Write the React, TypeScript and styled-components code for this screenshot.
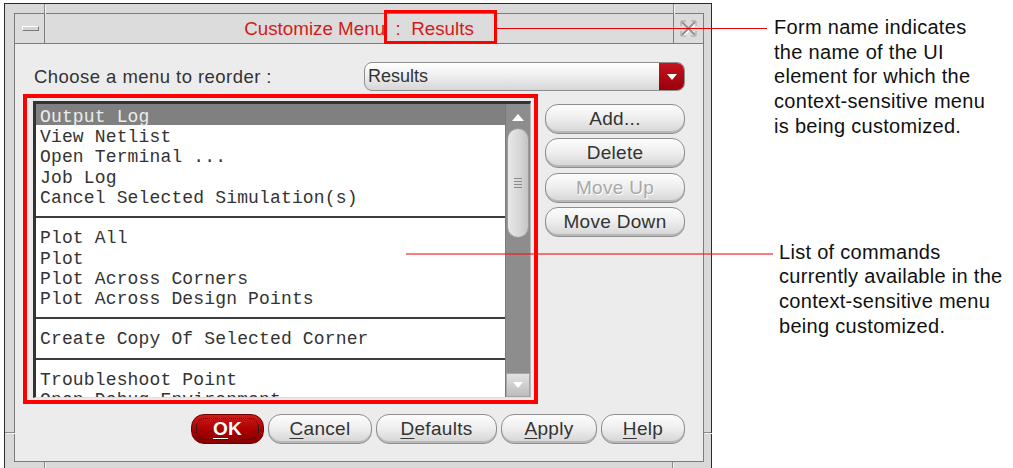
import React from "react";
import styled, { createGlobalStyle, css } from "styled-components";

const GlobalStyle = createGlobalStyle`
  html, body { margin: 0; padding: 0; background: #ffffff; }
  body { overflow: hidden; }
`;

const Page = styled.div`
  position: relative;
  width: 1013px;
  height: 468px;
  overflow: hidden;
  display: flex;
  align-items: flex-start;
  font-family: "Liberation Sans", Arial, sans-serif;
`;

const Window = styled.div`
  position: relative;
  flex: none;
  box-sizing: border-box;
  width: 708px;
  height: 470px;
  margin: 3px 0 0 4px;
  padding: 9px 7px 0 9px;
  background: #d9d9d9;
  border: 1px solid #2b2b2b;
  border-bottom: none;
`;

const FrameMark = styled.div<{ $x: number; $y: number; $w: number; $h: number }>`
  position: absolute;
  left: ${(p) => p.$x}px;
  top: ${(p) => p.$y}px;
  width: ${(p) => p.$w}px;
  height: ${(p) => p.$h}px;
  background: #8a8a8a;
  box-shadow: 1px 1px 0 #f4f4f4;
`;

const Inner = styled.div`
  box-sizing: border-box;
  height: 449px;
  display: flex;
  flex-direction: column;
  border: 1px solid #7c7c7c;
  background: #ececec;
`;

const TitleBar = styled.div`
  flex: none;
  height: 29px;
  display: flex;
  background: #dcdcdc;
  border-bottom: 1px solid #7c7c7c;
`;

const TitleButton = styled.div<{ $side: "left" | "right" }>`
  flex: none;
  width: 29px;
  display: grid;
  place-items: center;
  ${(p) =>
    p.$side === "left"
      ? css`border-right: 1px solid #7c7c7c;`
      : css`border-left: 1px solid #7c7c7c;`}
`;

const MinIcon = styled.div`
  width: 15px;
  height: 3px;
  background: #d4d4d4;
  border-top: 1px solid #ffffff;
  border-left: 1px solid #ffffff;
  border-bottom: 1px solid #7a7a7a;
  border-right: 1px solid #7a7a7a;
  margin-left: 1px;
`;

const Title = styled.div`
  flex: 1;
  text-align: center;
  color: #d41a1a;
  font-size: 18.8px;
  line-height: 29px;
  white-space: pre;
`;

const Body = styled.div`
  flex: 1;
  display: flex;
  flex-direction: column;
  padding: 18px 18px 0 18px;
`;

const TopRow = styled.div`
  display: flex;
  align-items: center;
  justify-content: space-between;
  height: 29px;
`;

const Label = styled.div`
  font-size: 18.5px;
  color: #333333;
  letter-spacing: 0.45px;
  padding-left: 1px;
`;

const Dropdown = styled.div`
  box-sizing: border-box;
  width: 321px;
  height: 29px;
  display: flex;
  border: 1px solid #8f8f8f;
  border-radius: 8px;
  overflow: hidden;
  background: linear-gradient(#ffffff, #f0f0f0 45%, #d6d6d6);
`;

const DropdownText = styled.div`
  flex: 1;
  padding-left: 3px;
  font-size: 18px;
  line-height: 27px;
  color: #333333;
`;

const DropdownArrow = styled.div`
  flex: none;
  width: 25px;
  display: grid;
  place-items: center;
  background: linear-gradient(#c41420, #9a0008);
`;

const Triangle = styled.div<{ $dir: "up" | "down"; $size: number }>`
  width: 0;
  height: 0;
  border-left: ${(p) => p.$size / 2}px solid transparent;
  border-right: ${(p) => p.$size / 2}px solid transparent;
  ${(p) =>
    p.$dir === "down"
      ? css`border-top: ${Math.round(p.$size * 0.55)}px solid #ffffff;`
      : css`border-bottom: ${Math.round(p.$size * 0.55)}px solid #ffffff;`}
`;

const MidRow = styled.div`
  display: flex;
  align-items: flex-start;
  gap: 14px;
  margin-top: 10px;
`;

const ListBox = styled.div`
  box-sizing: border-box;
  width: 498px;
  height: 297px;
  display: flex;
  overflow: hidden;
  background: #ffffff;
  border-top: 3px solid #333333;
  border-left: 3px solid #333333;
  border-right: 1px solid #b8b8b8;
  border-bottom: 1px solid #dcdcdc;
`;

const Rows = styled.div`
  flex: 1;
  overflow: hidden;
  padding-top: 1px;
`;

const Row = styled.div<{ $selected?: boolean }>`
  height: 20.23px;
  line-height: 25px;
  padding-left: 4px;
  font-family: "Liberation Mono", "Courier New", monospace;
  font-size: 18px;
  letter-spacing: 0.15px;
  white-space: pre;
  color: #333333;
  ${(p) =>
    p.$selected &&
    css`
      margin-top: -1px;
      height: 21.23px;
      line-height: 27px;
      background: #808080;
      color: #ededed;
    `}
`;

const Separator = styled.div`
  height: 20.23px;
  display: flex;
  align-items: center;
  padding-top: 2px;
  box-sizing: border-box;
  &::before {
    content: "";
    flex: 1;
    height: 2px;
    background: #3c3c3c;
  }
`;

const Scrollbar = styled.div`
  flex: none;
  width: 25px;
  display: flex;
  flex-direction: column;
  background: #8d8d8d;
  border-left: 1px solid #7a7a7a;
  box-sizing: border-box;
`;

const ScrollUp = styled.div`
  height: 22px;
  display: grid;
  place-items: center;
  padding-top: 4px;
  box-sizing: border-box;
`;

const Thumb = styled.div`
  margin: 2px 1px 0 1px;
  height: 110px;
  box-sizing: border-box;
  border-radius: 11px;
  border: 1px solid #9a9a9a;
  background: linear-gradient(90deg, #e8e8e8, #d6d6d6 60%, #c4c4c4);
  display: flex;
  flex-direction: column;
  align-items: center;
  justify-content: center;
  gap: 2px;
`;

const Grip = styled.div`
  width: 8px;
  height: 1px;
  background: #8a8a8a;
`;

const ScrollSpace = styled.div`
  flex: 1;
`;

const ScrollDown = styled.div`
  height: 24px;
  box-sizing: border-box;
  display: grid;
  place-items: center;
  background: linear-gradient(#e2e2e2, #bcbcbc);
  border: 1px solid #a5a5a5;
`;

const ButtonCol = styled.div`
  width: 140px;
  display: flex;
  flex-direction: column;
  gap: 4.4px;
  margin-top: 3px;
`;

const Button = styled.div<{ $w?: number; $disabled?: boolean; $primary?: boolean }>`
  position: relative;
  box-sizing: border-box;
  ${(p) => (p.$w ? css`width: ${p.$w}px;` : css`width: 100%;`)}
  height: 30px;
  display: flex;
  align-items: center;
  justify-content: center;
  border: 1px solid #8e8e8e;
  border-radius: 13px;
  background: linear-gradient(#fdfdfd, #ededed 50%, #d4d4d4);
  box-shadow: inset 0 -2px 0 #b8b8b8;
  font-size: 19px;
  letter-spacing: 0.3px;
  color: #333333;
  ${(p) =>
    p.$disabled &&
    css`
      color: #a9a9a9;
      text-shadow: 1px 1px 0 #ffffff;
    `}
  ${(p) =>
    p.$primary &&
    css`
      background: linear-gradient(#d01a1a, #a80000 55%, #880000);
      border-color: #6a0000;
      box-shadow: none;
      color: #ffffff;
      font-weight: bold;
      &::after {
        content: "";
        position: absolute;
        inset: 3px 4px;
        border: 1px dotted #111111;
        border-radius: 9px;
      }
    `}
`;

const Mnemonic = styled.span`
  text-decoration: underline;
  text-underline-offset: 3px;
`;

const BottomRow = styled.div`
  display: flex;
  justify-content: flex-end;
  gap: 4px;
  margin-top: 16px;
`;

const Notes = styled.div`
  display: flex;
  flex-direction: column;
  margin-left: 62px;
  padding-top: 15px;
  color: #111111;
  font-family: "Liberation Sans", Arial, sans-serif;
`;

const Note = styled.div<{ $offset: number; $gap: number }>`
  margin-left: ${(p) => p.$offset}px;
  margin-top: ${(p) => p.$gap}px;
  font-size: 20px;
  line-height: 24.7px;
  letter-spacing: 0.3px;
  white-space: nowrap;
`;

const Highlight = styled.div<{ $x: number; $y: number; $w: number; $h: number; $b: number }>`
  position: absolute;
  left: ${(p) => p.$x}px;
  top: ${(p) => p.$y}px;
  width: ${(p) => p.$w}px;
  height: ${(p) => p.$h}px;
  box-sizing: border-box;
  border: ${(p) => p.$b}px solid #ff0000;
  pointer-events: none;
`;

const Leader = styled.div<{ $x: number; $y: number; $w: number; $soft?: boolean }>`
  position: absolute;
  left: ${(p) => p.$x}px;
  top: ${(p) => p.$y}px;
  width: ${(p) => p.$w}px;
  height: ${(p) => (p.$soft ? 2 : 1)}px;
  background: ${(p) => (p.$soft ? "rgba(238, 20, 20, 0.55)" : "#e80000")};
`;

type Item = { text: string } | { sep: true };

const items: Item[] = [
  { text: "Output Log" },
  { text: "View Netlist" },
  { text: "Open Terminal ..." },
  { text: "Job Log" },
  { text: "Cancel Selected Simulation(s)" },
  { sep: true },
  { text: "Plot All" },
  { text: "Plot" },
  { text: "Plot Across Corners" },
  { text: "Plot Across Design Points" },
  { sep: true },
  { text: "Create Copy Of Selected Corner" },
  { sep: true },
  { text: "Troubleshoot Point" },
  { text: "Open Debug Environment" },
];

const CloseIcon = () => (
  <svg width="19" height="19" viewBox="0 0 19 19">
    <path d="M3 3 L16 16 M16 3 L3 16" stroke="#ffffff" strokeWidth="2.2" transform="translate(1 1)" />
    <path d="M3 3 L16 16 M16 3 L3 16" stroke="#8e8e8e" strokeWidth="1.8" />
    <path d="M2 2 h5 M2 2 v5 M17 2 h-5 M17 2 v5 M17 17 h-5 M17 17 v-5 M2 17 h5 M2 17 v-5" stroke="#a0a0a0" strokeWidth="1" fill="none" />
  </svg>
);

export default function App() {
  return (
    <Page>
      <GlobalStyle />
      <Window>
        <FrameMark $x={39} $y={0} $w={1} $h={9} />
        <FrameMark $x={668} $y={0} $w={1} $h={9} />
        <FrameMark $x={0} $y={428} $w={9} $h={1} />
        <FrameMark $x={699} $y={428} $w={7} $h={1} />
        <FrameMark $x={39} $y={458} $w={1} $h={10} />
        <FrameMark $x={667} $y={458} $w={1} $h={10} />
        <Inner>
          <TitleBar>
            <TitleButton $side="left">
              <MinIcon />
            </TitleButton>
            <Title>{"Customize Menu  :  Results"}</Title>
            <TitleButton $side="right">
              <CloseIcon />
            </TitleButton>
          </TitleBar>
          <Body>
            <TopRow>
              <Label>Choose a menu to reorder :</Label>
              <Dropdown>
                <DropdownText>Results</DropdownText>
                <DropdownArrow>
                  <Triangle $dir="down" $size={11} />
                </DropdownArrow>
              </Dropdown>
            </TopRow>
            <MidRow>
              <ListBox>
                <Rows>
                  {items.map((it, i) =>
                    "sep" in it ? (
                      <Separator key={i} />
                    ) : (
                      <Row key={i} $selected={i === 0}>
                        {it.text}
                      </Row>
                    )
                  )}
                </Rows>
                <Scrollbar>
                  <ScrollUp>
                    <Triangle $dir="up" $size={12} />
                  </ScrollUp>
                  <Thumb>
                    <Grip />
                    <Grip />
                    <Grip />
                    <Grip />
                  </Thumb>
                  <ScrollSpace />
                  <ScrollDown>
                    <Triangle $dir="down" $size={11} />
                  </ScrollDown>
                </Scrollbar>
              </ListBox>
              <ButtonCol>
                <Button>Add...</Button>
                <Button>Delete</Button>
                <Button $disabled>Move Up</Button>
                <Button>Move Down</Button>
              </ButtonCol>
            </MidRow>
            <BottomRow>
              <Button $w={73} $primary>
                <Mnemonic>O</Mnemonic>K
              </Button>
              <Button $w={104}>
                <Mnemonic>C</Mnemonic>ancel
              </Button>
              <Button $w={121}>
                <Mnemonic>D</Mnemonic>efaults
              </Button>
              <Button $w={96}>
                <Mnemonic>A</Mnemonic>pply
              </Button>
              <Button $w={84}>
                <Mnemonic>H</Mnemonic>elp
              </Button>
            </BottomRow>
          </Body>
        </Inner>
      </Window>
      <Notes>
        <Note $offset={0} $gap={0}>
          Form name indicates
          <br />
          the name of the UI
          <br />
          element for which the
          <br />
          context-sensitive menu
          <br />
          is being customized.
        </Note>
        <Note $offset={5} $gap={101}>
          List of commands
          <br />
          currently available in the
          <br />
          context-sensitive menu
          <br />
          being customized.
        </Note>
      </Notes>
      <Highlight $x={384} $y={10} $w={113} $h={34} $b={3} />
      <Highlight $x={23} $y={94} $w={515} $h={310} $b={4} />
      <Leader $x={497} $y={28} $w={270} />
      <Leader $x={406} $y={253} $w={367} $soft />
    </Page>
  );
}
